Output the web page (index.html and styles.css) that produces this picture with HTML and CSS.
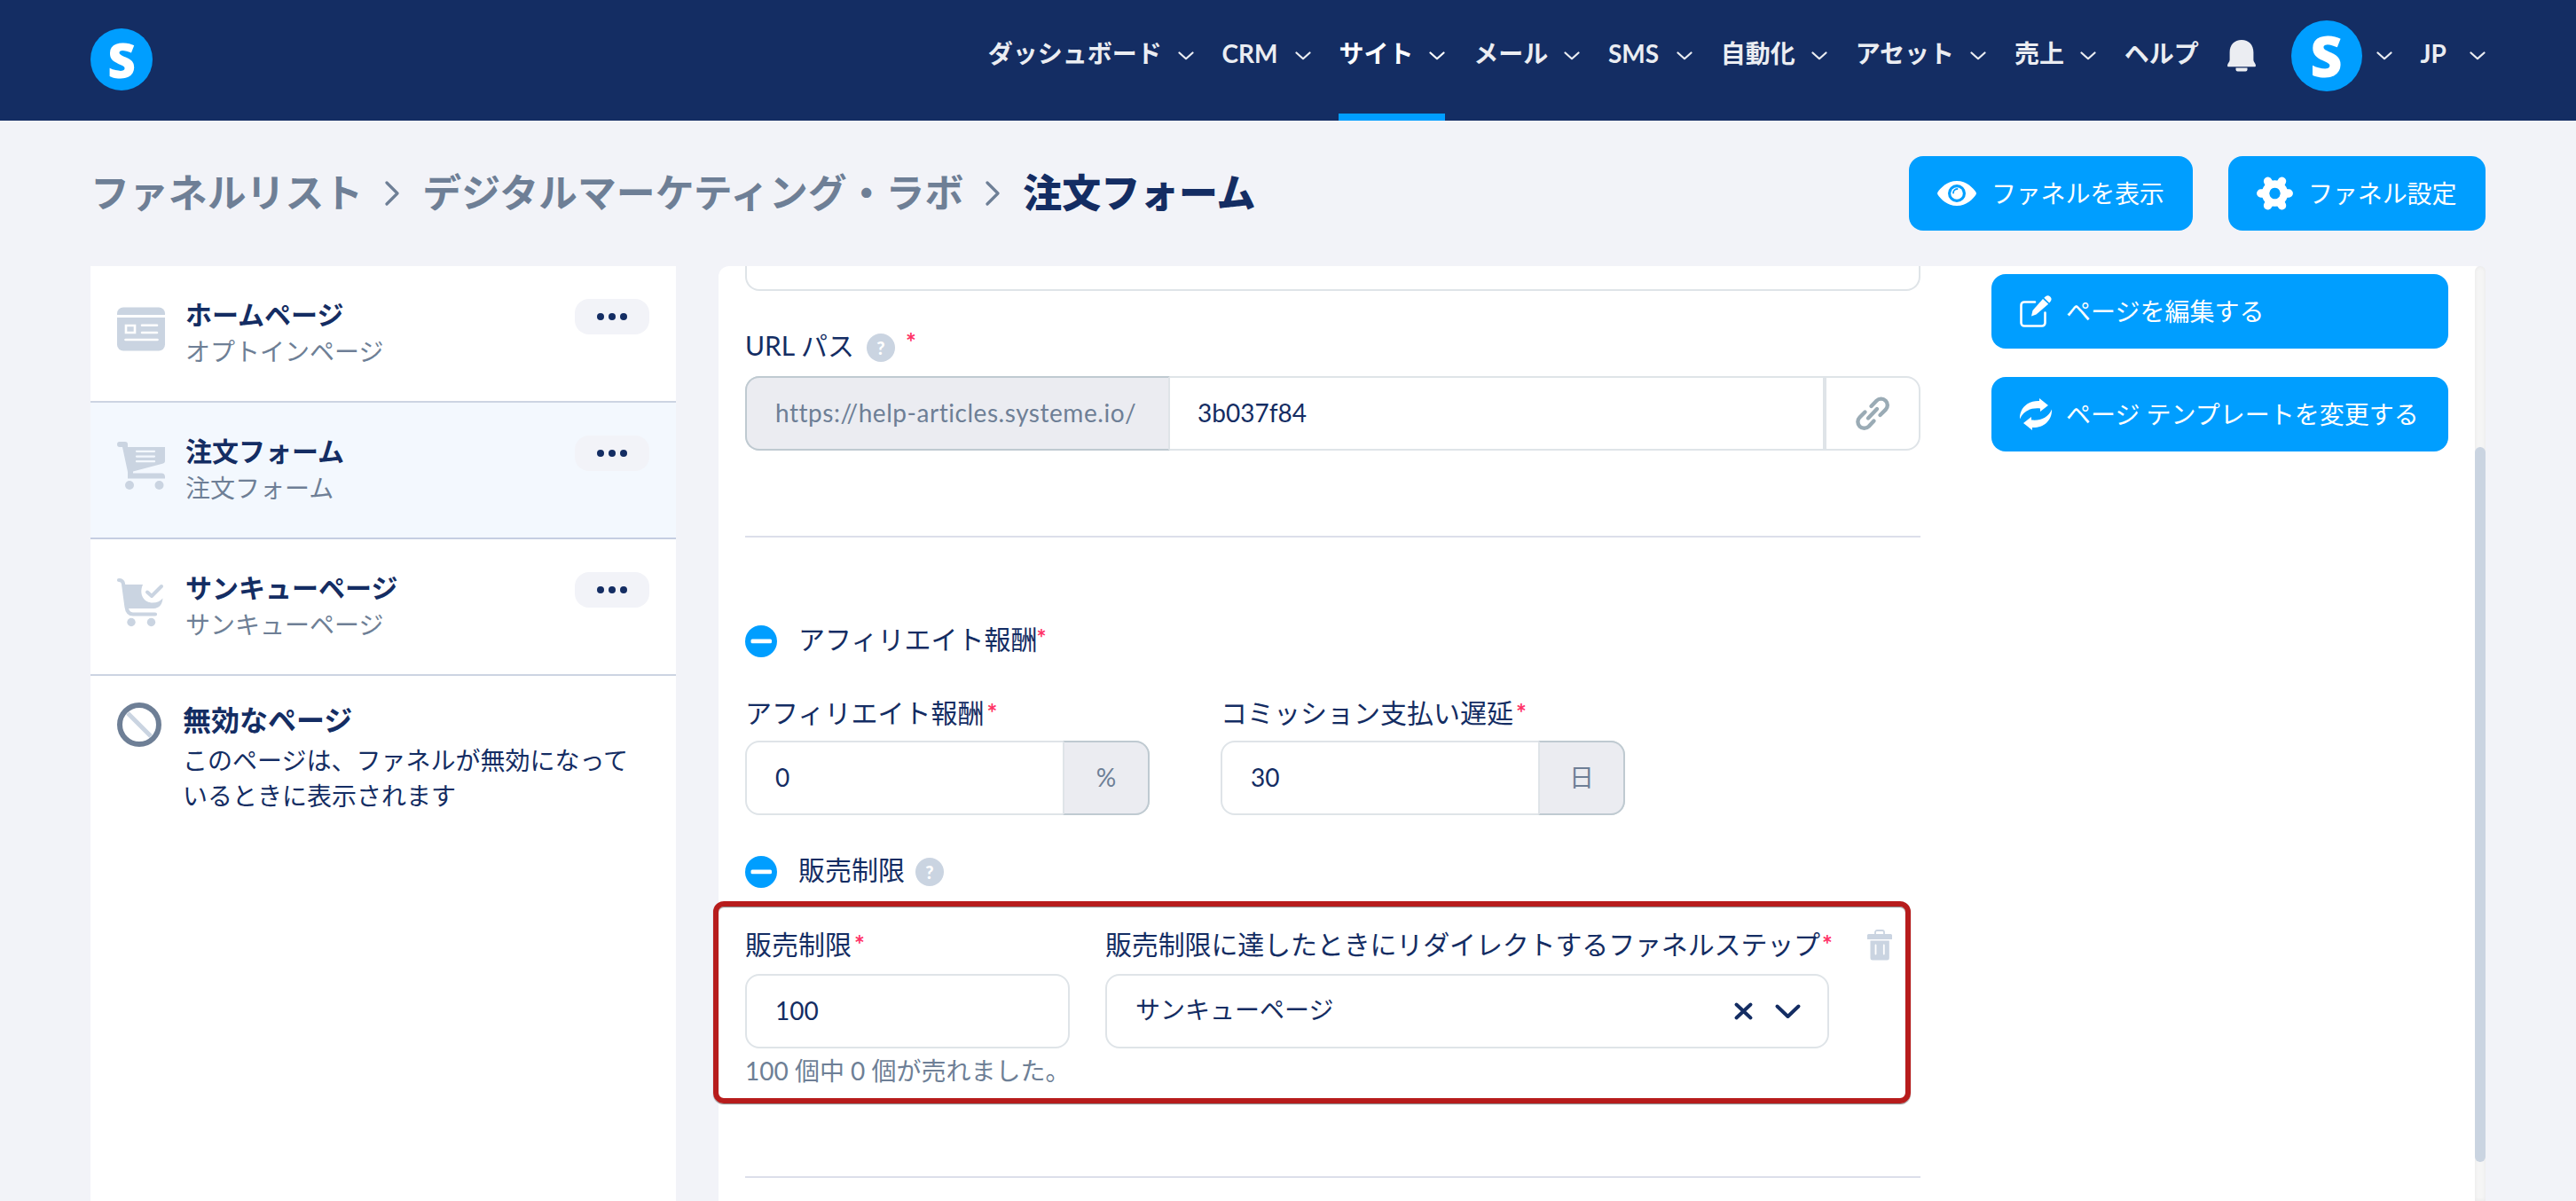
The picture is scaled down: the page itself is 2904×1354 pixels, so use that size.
FILE: index.html
```html
<!DOCTYPE html>
<html lang="ja">
<head>
<meta charset="utf-8">
<title>注文フォーム</title>
<link rel="stylesheet" href="styles.css">
</head>
<body>
<svg class="defs" aria-hidden="true">
  <symbol id="chevron" viewBox="0 0 18 10"><path d="M1.500 1.500 9 8.200l7.500-6.700" fill="none" stroke="currentColor" stroke-width="2.200" stroke-linecap="round" stroke-linejoin="round"/></symbol>
  <symbol id="crumb" viewBox="0 0 16 28"><path d="M2 2 14 14 2 26" fill="none" stroke="currentColor" stroke-width="3.200" stroke-linecap="round" stroke-linejoin="round"/></symbol>
  <symbol id="minus" viewBox="0 0 36 36"><circle cx="18" cy="18" r="18" fill="#009eff"/><rect x="6.500" y="15.500" width="23.500" height="4.800" rx="1.500" fill="#fff"/></symbol>
</svg>

<header class="topbar">
  <a class="logo"><span>S</span></a>
  <nav class="nav">
    <a class="nav-item"><span>ダッシュボード</span><svg class="chev"><use href="#chevron"/></svg></a>
    <a class="nav-item"><span class="w-crm">CRM</span><svg class="chev"><use href="#chevron"/></svg></a>
    <a class="nav-item active"><span>サイト</span><svg class="chev"><use href="#chevron"/></svg></a>
    <a class="nav-item"><span>メール</span><svg class="chev"><use href="#chevron"/></svg></a>
    <a class="nav-item"><span class="w-sms">SMS</span><svg class="chev"><use href="#chevron"/></svg></a>
    <a class="nav-item"><span>自動化</span><svg class="chev"><use href="#chevron"/></svg></a>
    <a class="nav-item"><span>アセット</span><svg class="chev"><use href="#chevron"/></svg></a>
    <a class="nav-item"><span>売上</span><svg class="chev"><use href="#chevron"/></svg></a>
    <a class="nav-item"><span>ヘルプ</span></a>
    <svg class="bell" viewBox="0 0 32 36"><path d="M16 0C8 0 2.600 5.500 2.600 14v8.500C2.600 25 0 26.500 0 29c0 .8.6 1.300 1.500 1.300h29c.9 0 1.500-.5 1.500-1.300 0-2.500-2.600-4-2.600-6.500V14C29.400 5.500 24 0 16 0z" fill="currentColor"/><path d="M9.500 31.500h13v2a2 2 0 0 1-2 2h-9a2 2 0 0 1-2-2z" fill="currentColor"/></svg>
    <a class="account"><b class="avatar"><span>S</span></b><svg class="chev"><use href="#chevron"/></svg></a>
    <a class="nav-item lang"><span>JP</span><svg class="chev"><use href="#chevron"/></svg></a>
  </nav>
</header>

<div class="page-head">
  <div class="crumbs">
    <a>ファネルリスト</a>
    <svg><use href="#crumb"/></svg>
    <a>デジタルマーケティング・ラボ</a>
    <svg><use href="#crumb"/></svg>
    <strong>注文フォーム</strong>
  </div>
  <a class="btn btn-view">
    <svg width="44" height="28" viewBox="0 0 44 28"><path fill="#fff" fill-rule="evenodd" d="M22 0C11 0 3.500 8 .4 12.800a2.200 2.200 0 0 0 0 2.400C3.500 20 11 28 22 28s18.500-8 21.600-12.800a2.200 2.200 0 0 0 0-2.400C40.500 8 33 0 22 0zm0 24a10 10 0 1 1 0-20 10 10 0 0 1 0 20z"/><circle cx="22" cy="14" r="6.800" fill="#fff"/><path d="M18 13.500a4.500 4.500 0 0 1 4.500-4.500" stroke="#009eff" stroke-width="1.800" fill="none" stroke-linecap="round"/></svg>
    <span>ファネルを表示</span>
  </a>
  <a class="btn btn-settings">
    <svg width="41" height="38" viewBox="0 0 41 38"><path fill="none" stroke="#fff" stroke-width="8.500" stroke-linejoin="round" d="M20.500 8.500a10.500 10.500 0 1 0 .01 0z"/><g stroke="#fff" stroke-width="9.500" stroke-linecap="round"><path d="M4.800 19h3M33.200 19h3M12.600 5.300l1.500 2.600M27 30.100l1.500 2.600M12.600 32.700l1.500-2.600M27 7.900l1.500-2.600"/></g></svg>
    <span>ファネル設定</span>
  </a>
</div>

<div class="layout">
  <aside class="steps">
    <div class="step">
      <svg class="step-icon" viewBox="0 0 54 54"><rect y="2.500" width="54" height="49" rx="7" fill="#cad4e1"/><path d="M0 12.500h54" stroke="#fff" stroke-width="3"/><path d="M10 23h10v8H10zM28 22.800h17M28 31h17M9.500 39h36" stroke="#fff" stroke-width="2.600" fill="none" stroke-linecap="round"/></svg>
      <div class="step-text"><b>ホームページ</b><span>オプトインページ</span></div>
      <button class="dots"><i></i><i></i><i></i></button>
    </div>
    <div class="step current">
      <svg class="step-icon" viewBox="0 0 54 54"><path fill="#cad4e1" d="M2.500 0H9c2 0 3 1.200 3 3v3h42v16c0 1.200-.8 2-2 2.500L18 33.500v2h32c2.500 0 4 1.500 4 4v2H12V34L6 6H3C1 6 0 4.800 0 3S1 0 2.500 0z"/><path d="M22 10.800h20M22 16.600h20M22 22.200h20" stroke="#f3f8fe" stroke-width="2.300" stroke-linecap="round"/><circle cx="14" cy="49" r="5" fill="#cad4e1"/><circle cx="47.500" cy="49" r="5" fill="#cad4e1"/></svg>
      <div class="step-text"><b>注文フォーム</b><span>注文フォーム</span></div>
      <button class="dots"><i></i><i></i><i></i></button>
    </div>
    <div class="step">
      <svg class="step-icon" viewBox="0 0 54 54"><path d="M2 2c3 0 4.500 1 5 4l3.500 26c.7 5.500 3 8.500 7.500 8.500h25" fill="none" stroke="#cad4e1" stroke-width="4.200" stroke-linecap="round"/><path d="M6 7h23c-5 12 2 20.500 11 20.500 5 0 9-2 11.500-5-.7 8-4.500 11-10 11.500L12 34z" fill="#cad4e1"/><path d="m34 15.500 5 4.500L50 9" fill="none" stroke="#cad4e1" stroke-width="4" stroke-linecap="round" stroke-linejoin="round"/><circle cx="16" cy="49.500" r="4.700" fill="#cad4e1"/><circle cx="38.500" cy="49.500" r="4.700" fill="#cad4e1"/></svg>
      <div class="step-text"><b>サンキューページ</b><span>サンキューページ</span></div>
      <button class="dots"><i></i><i></i><i></i></button>
    </div>
    <div class="inactive">
      <svg width="50" height="50" viewBox="0 0 50 50"><path d="m12 12 26 26" stroke="#cad4e1" stroke-width="5"/><circle cx="25" cy="25" r="22" fill="none" stroke="#6e7f96" stroke-width="6"/></svg>
      <div class="inactive-text"><b>無効なページ</b><p>このページは、ファネルが無効になっているときに表示されます</p></div>
    </div>
  </aside>

  <main class="panel">
    <div class="form">
      <div class="clipped-field"></div>
      <div class="label url-label"><span class="url-text">URL パス</span><i class="help">?</i><em>*</em></div>
      <div class="group url-group">
        <span class="addon prefix"><span>https://help-articles.systeme.io/</span></span>
        <span class="value"><span class="slug">3b037f84</span></span>
        <button class="link"><svg width="38" height="38" viewBox="0 0 38 38"><g fill="none" stroke="#9aabb5" stroke-width="4.400" stroke-linecap="round"><path d="M17.500 11 23.500 4.700a7.200 7.200 0 0 1 10.200 10.200L27.500 21"/><path d="M10.500 17.500 4.500 23.500A7.200 7.200 0 0 0 14.700 33.700L20.500 27.500"/><path d="M14 24.500 24 14"/></g></svg></button>
      </div>
      <hr class="rule">
      <div class="toggle first"><svg><use href="#minus"/></svg><span>アフィリエイト報酬</span><em>*</em></div>
      <div class="row commission">
        <div class="field">
          <div class="label">アフィリエイト報酬<em>*</em></div>
          <div class="group"><span class="value">0</span><span class="addon unit">%</span></div>
        </div>
        <div class="field">
          <div class="label">コミッション支払い遅延<em>*</em></div>
          <div class="group"><span class="value">30</span><span class="addon unit">日</span></div>
        </div>
      </div>
      <div class="toggle second"><svg><use href="#minus"/></svg><span>販売制限</span><i class="help">?</i></div>
      <div class="row limit">
        <div class="limit-amount">
          <div class="label">販売制限<em>*</em></div>
          <div class="group"><span class="value">100</span></div>
          <p class="hint">100 個中 0 個が売れました。</p>
        </div>
        <div class="limit-target">
          <div class="label"><span class="target-text">販売制限に達したときにリダイレクトするファネルステップ</span><em>*</em></div>
          <div class="group select"><span class="value">サンキューページ</span>
            <svg width="21" height="20" viewBox="0 0 21 20"><path d="m2.500 2.500 16 15m0-15-16 15" stroke="#142d63" stroke-width="4" stroke-linecap="round"/></svg>
            <svg width="29" height="17" viewBox="0 0 29 17"><path d="m2.500 2.500 12 11.500 12-11.500" fill="none" stroke="#142d63" stroke-width="4" stroke-linecap="round" stroke-linejoin="round"/></svg>
          </div>
        </div>
        <svg class="trash" width="28" height="35" viewBox="0 0 28 35"><path d="M9 6V3a2 2 0 0 1 2-2h6a2 2 0 0 1 2 2v3" fill="none" stroke="#cad4e1" stroke-width="1.800"/><path d="M1.500 5h25a1.500 1.500 0 0 1 1.500 1.500V11H0V6.500A1.500 1.500 0 0 1 1.500 5z" fill="#cad4e1"/><path d="M3.500 12.500h21.300V32a2.500 2.500 0 0 1-2.500 2.500H6A2.500 2.500 0 0 1 3.500 32z" fill="#cad4e1"/><path d="M9.500 17.500v10M18.800 17.500v10" stroke="#fff" stroke-width="1.800" stroke-linecap="round"/></svg>
        <div class="highlight"></div>
      </div>
      <hr class="rule last">
    </div>
    <div class="actions">
      <a class="btn wide"><svg width="36" height="36" viewBox="0 0 36 36"><path d="M17 7.500H5A3.500 3.500 0 0 0 1.500 11v20A3.500 3.500 0 0 0 5 34.500h20a3.500 3.500 0 0 0 3.500-3.500V19.500" fill="none" stroke="#fff" stroke-width="2.600" stroke-linecap="round"/><path d="m26 4 6.200 5.800L18.500 21.500l-5.500 2 1.500-6.500z" fill="#fff"/><path d="m27.300 2.800 1.700-1.600a4 4 0 0 1 5.700 5.500l-1.500 1.800z" fill="#fff"/></svg><span>ページを編集する</span></a>
      <a class="btn wide"><svg width="36" height="36" viewBox="0 0 36 36"><path id="arc" d="M0 23.500C-.5 11 9 2.500 22 3V0l10 8-9 7v-3.500C12.500 10.500 4 14 0 23.500z" fill="#fff"/><use href="#arc" transform="rotate(180 18 18)"/></svg><span>ページ テンプレートを変更する</span></a>
    </div>
    <div class="scrollbar"><i></i></div>
  </main>
</div>
</body>
</html>
```
FILE: styles.css
```css
* { box-sizing: border-box; }
body {
  margin: 0;
  height: 1354px;
  overflow: hidden;
  display: flex;
  flex-direction: column;
  background: #f2f3f8;
  color: #142d63;
  font: 28px/40px Lato, "Noto Sans CJK JP", sans-serif;
  white-space: nowrap;
}
svg { display: block; flex: none; overflow: visible; }
button { border: 0; padding: 0; font: inherit; background: none; }
p { margin: 0; }
.defs { position: absolute; width: 0; height: 0; }

/* top bar */
.topbar {
  flex: none;
  height: 136px;
  padding: 0 102px;
  display: flex;
  justify-content: space-between;
  background: #142d63;
  color: #ebedf2;
}
.logo, .avatar {
  display: flex;
  align-items: center;
  justify-content: center;
  border-radius: 50%;
  background: #009eff;
  color: #fff;
  font-family: "Open Sans", sans-serif;
  font-weight: 800;
}
.logo { width: 70px; height: 70px; margin-top: 32px; font-size: 55px; }
.avatar { width: 80px; height: 80px; font-size: 63px; }
.nav { display: flex; font-weight: 700; }
.nav-item {
  display: flex;
  align-items: center;
  gap: 18px;
  height: 136px;
  margin-right: 31.800px;
  padding-bottom: 16px;
}
.nav-item.active { color: #fff; box-shadow: inset 0 -8px #009eff; }
.nav-item .w-crm { width: 64px; }
.nav-item .w-sms { width: 59px; }
.chev { width: 18px; height: 10px; margin-top: 5px; }
.bell { width: 32px; height: 36px; margin: 45px 40px 0 0; }
.account { display: flex; align-items: center; gap: 16px; height: 80px; margin: 23px 32px 0 0; }
.account .chev { margin-top: -1px; }
.nav-item.lang { margin-right: 0; gap: 20px; }
.lang span { width: 35.500px; }

/* breadcrumbs and page buttons */
.page-head {
  flex: none;
  height: 164px;
  padding: 0 102px;
  display: flex;
  align-items: center;
}
.crumbs {
  flex: 1;
  display: flex;
  align-items: center;
  color: #6e7f96;
  font-size: 43.900px;
  font-weight: 700;
}
.crumbs a, .crumbs strong { padding-bottom: 3px; }
.crumbs svg { width: 16px; height: 28px; margin: 0 26px 0 25px; }
.crumbs strong { color: #142d63; }
.btn {
  display: flex;
  align-items: center;
  height: 84px;
  padding: 0 32px;
  border-radius: 16px;
  background: #009eff;
  color: #fff;
  gap: 17px;
}
.btn-view { width: 320px; margin-right: 40px; letter-spacing: -.2px; }
.btn-settings { width: 290px; letter-spacing: -.1px; }

/* funnel steps */
.layout { flex: none; display: flex; height: 1054px; padding: 0 102px; }
.steps { width: 660px; background: #fff; }
.step {
  display: flex;
  height: 154px;
  padding: 0 30px;
  border-bottom: 2px solid #ccd4e2;
}
.step.current { background: #f3f8fe; border-color: #c5cee2; }
.step-icon { width: 54px; height: 54px; margin: 44px 23px 0 0; }
.step-text { flex: 1; display: flex; flex-direction: column; padding-top: 33px; }
.step-text b { font-size: 30px; line-height: 42px; }
.step-text span { color: #6e7f96; line-height: 42px; }
.dots {
  display: flex;
  align-items: center;
  justify-content: center;
  gap: 5px;
  width: 84px;
  height: 40px;
  margin-top: 37px;
  border-radius: 16px;
  background: #f2f3f8;
}
.dots i { width: 8px; height: 8px; border-radius: 50%; background: #142d63; }
.inactive { display: flex; gap: 24px; padding: 30px 30px 0; }
.inactive-text { width: 504px; margin-top: -2px; white-space: normal; }
.inactive-text b { display: block; margin-bottom: 3px; font-size: 32px; line-height: 44px; }

/* main panel */
.panel {
  display: flex;
  width: 1992px;
  margin-left: 48px;
  padding-left: 30px;
  border-radius: 12px 12px 0 0;
  background: #fff;
}
.form { width: 1325px; margin-right: 80px; }
.clipped-field {
  height: 28px;
  border: 2px solid #dfe4e8;
  border-top: 0;
  border-radius: 0 0 16px 16px;
}
.label { display: flex; align-items: center; height: 40px; padding-bottom: 2px; font-size: 30px; }
.label em, .toggle em { margin-left: 3px; color: #ff3366; font-style: normal; font-size: 28px; font-weight: 700; }
.help {
  display: flex;
  align-items: center;
  justify-content: center;
  width: 32px;
  height: 32px;
  border-radius: 50%;
  background: #cad4e1;
  color: #fff;
  font: 900 20px/32px Lato, sans-serif;
}
.url-label { margin: 42px 0 14px; }
.url-label .help { margin: 6px 0 0 13px; }
.url-label em { margin: -8px 0 0 12px; }
.url-text { width: 124px; }
.group {
  display: flex;
  height: 84px;
  border: 2px solid #dfe4e8;
  border-radius: 16px;
}
.value { flex: 1; display: flex; align-items: center; padding: 0 0 3px 32px; }
.addon {
  display: flex;
  align-items: center;
  margin: -2px;
  padding-bottom: 3px;
  border: 2px solid #bfcad1;
  background: #ebecf1;
  color: #6e7f96;
}
.prefix { width: 479px; padding-left: 32px; border-radius: 16px 0 0 16px; border-right-color: #dfe4e8; }
.prefix span { letter-spacing: .54px; }
.slug { padding-left: 1px; }
.link {
  display: flex;
  align-items: center;
  justify-content: center;
  width: 108px;
  border-left: 4px solid #dfe4e8;
}
.rule { height: 2px; margin: 96px 0 0; border: 0; background: #dcdfea; }
.rule.last { margin-top: 99px; }
.toggle { display: flex; align-items: center; height: 40px; font-size: 30px; }
.toggle svg { width: 36px; height: 36px; margin-right: 24px; }
.toggle span { margin-top: -7px; }
.toggle em { margin: -8px 0 0 -1px; font-size: 26px; }
.toggle .help { margin-left: 12px; }
.toggle.first { margin-top: 97px; }
.toggle.second { margin-top: 44px; }
.row { display: flex; position: relative; }
.commission { gap: 80px; margin-top: 41px; }
.commission .field { width: 456px; }
.commission .group { margin-top: 11px; }
.unit { width: 98px; justify-content: center; border-radius: 0 16px 16px 0; border-left-color: #dfe4e8; }
.limit { margin-top: 42px; }
.limit .group { margin-top: 13px; }
.limit-amount { width: 366px; margin-right: 40px; }
.limit-target { width: 816px; }
.limit-target .label em { margin-left: 2px; }
.target-text { letter-spacing: -.15px; }
.hint { margin-top: 5px; color: #6e7f96; }
.select { align-items: center; gap: 25px; padding-right: 30px; }
.select .value { padding-bottom: 5px; }
.trash { margin: 3px 0 0 43px; }
/* red outline over the sales limit section */
.highlight {
  position: absolute;
  left: -36px;
  top: -29px;
  width: 1350px;
  height: 228px;
  border: 6.500px solid #b71c1c;
  border-radius: 12px;
  box-shadow: 0 1px 1px rgba(0, 0, 0, .5), inset 0 1px 1px rgba(0, 0, 0, .5);
}
.actions { display: flex; flex-direction: column; gap: 32px; width: 515px; padding-top: 9px; }
.wide { gap: 16px; }
.scrollbar {
  width: 12px;
  margin-left: 30px;
  padding-top: 204px;
  border-radius: 6px 6px 0 0;
  background: #f5f5f5;
  box-shadow: inset 0 0 5px rgba(0, 0, 0, .06);
}
.scrollbar i { display: block; height: 806px; border-radius: 6px; background: #cad4e1; }
```
